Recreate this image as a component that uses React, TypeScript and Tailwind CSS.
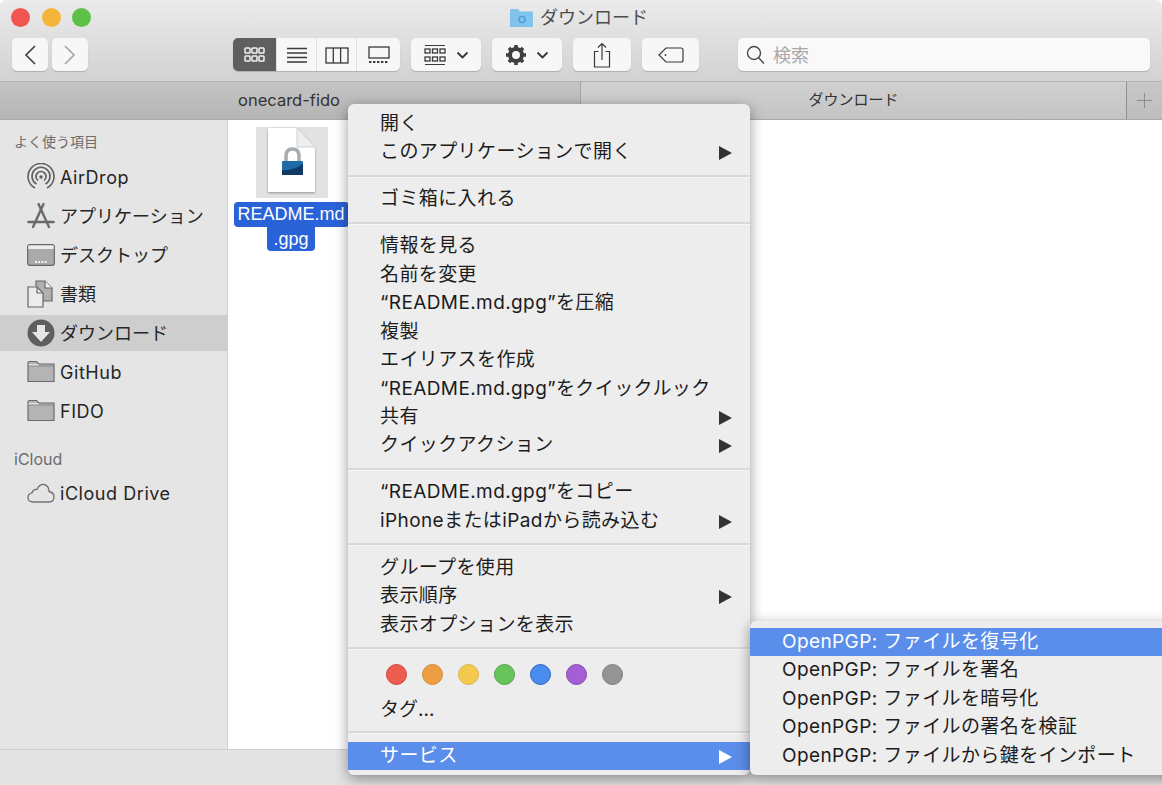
import React from 'react';

const font = { fontFamily: 'Inter, "Noto Sans CJK JP", sans-serif' };
const labelFont = { fontFamily: '"Liberation Sans", "Noto Sans CJK JP", sans-serif' };

const Arrow = ({ color = '#333' }: { color?: string }) => (
  <svg width="14" height="14" viewBox="0 0 14 14" className="absolute right-[18px] top-[8px]">
    <path d="M1 0 L14 7 L1 14 Z" fill={color} />
  </svg>
);

const MenuRow = ({ label, arrow, active }: { label: string; arrow?: boolean; active?: boolean }) => (
  <div
    className={`relative h-[28.45px] pl-[32px] text-[19px] leading-[28.45px] tracking-[0.4px] whitespace-nowrap ${
      active ? 'bg-[#5b8dea] text-white' : 'text-[#1c1c1c]'
    }`}
  >
    {label}
    {arrow && <Arrow color={active ? '#ffffff' : '#333333'} />}
  </div>
);

const Sep = () => (
  <div className="h-[18.5px] flex items-center">
    <div className="w-full h-[3px] bg-[#d9d9d9] border-b border-[#f6f6f6]" />
  </div>
);

const tagColors = [
  ['#ee5b4f', '#c9423a'],
  ['#ef9d42', '#d08a3c'],
  ['#f4c94f', '#dcb54a'],
  ['#67c45c', '#55a24c'],
  ['#4a8cf0', '#2f62b8'],
  ['#a55fd6', '#8346ad'],
  ['#949494', '#7d7d7d'],
];

const SegIcon = ({ children, w = 24, h = 20 }: { children: React.ReactNode; w?: number; h?: number }) => (
  <svg width={w} height={h} viewBox={`0 0 ${w} ${h}`} fill="none" stroke="#3a3a3a" strokeWidth="1.3">
    {children}
  </svg>
);

const Grid = ({ color }: { color: string }) => (
  <g fill="none" stroke={color} strokeWidth="1.5">
    {[2, 9, 16].map((x) =>
      [3, 11].map((y) => <rect key={`${x}-${y}`} x={x} y={y} width="5" height="5" rx="0.8" />)
    )}
  </g>
);

const ToolButton = ({ className, children }: { className: string; children: React.ReactNode }) => (
  <div className={`h-[33px] rounded-[5px] bg-[#f7f7f7] shadow-[0_1px_1px_rgba(0,0,0,0.18)] flex items-center justify-center ${className}`}>
    {children}
  </div>
);

const Chevron = () => (
  <svg width="13" height="8" viewBox="0 0 13 8" fill="none" stroke="#333" strokeWidth="1.8">
    <path d="M1.5 1.5 L6.5 6.5 L11.5 1.5" />
  </svg>
);

const FolderIcon = () => (
  <svg width="28" height="24" viewBox="0 0 28 24">
    <path d="M1 21.5 V3 Q1 1.5 2.5 1.5 H9.5 L12 4 H27 V21.5 Z" fill="#b4b4b4" stroke="#6b6b6b" strokeWidth="1.2" />
    <path d="M1 6 H27" stroke="#8a8a8a" strokeWidth="1" />
    <path d="M1.6 4.8 H11.5" stroke="#f2f2f2" strokeWidth="1" />
  </svg>
);

const sidebarRows: { label: string; icon: React.ReactNode; selected?: boolean; latin?: boolean }[] = [
  {
    label: 'AirDrop',
    latin: true,
    icon: (
      <svg width="28" height="28" viewBox="0 0 28 28" fill="none" stroke="#5f5f5f">
        <path d="M8 25 A13 13 0 1 1 20 25" strokeWidth="1.6" />
        <path d="M9.5 21 A9 9 0 1 1 18.5 21" strokeWidth="1.6" />
        <path d="M11 17.5 A5 5 0 1 1 17 17.5" strokeWidth="1.6" />
        <circle cx="14" cy="14" r="1.7" fill="#5f5f5f" stroke="none" />
      </svg>
    ),
  },
  {
    label: 'アプリケーション',
    icon: (
      <svg width="28" height="28" viewBox="0 0 28 28" fill="none" stroke="#6a6a6a" strokeLinecap="round">
        <path d="M11.5 2 L22 25" strokeWidth="2.4" />
        <path d="M16.5 2 L6 25" strokeWidth="2.4" />
        <path d="M1.5 20 H26.5" strokeWidth="2.6" />
      </svg>
    ),
  },
  {
    label: 'デスクトップ',
    icon: (
      <svg width="28" height="22" viewBox="0 0 28 22">
        <rect x="0.7" y="0.7" width="26.6" height="20.6" rx="2" fill="#aaaaaa" stroke="#666" strokeWidth="1.2" />
        <rect x="1.4" y="1.4" width="25.2" height="3.6" fill="#ececec" />
        <path d="M8 18 H20" stroke="#eeeeee" strokeWidth="2" strokeDasharray="2 1.2" />
      </svg>
    ),
  },
  {
    label: '書類',
    icon: (
      <svg width="26" height="28" viewBox="0 0 26 28" fill="none" stroke="#666" strokeWidth="1.2">
        <path d="M9 6 V1 H18 L25 8 V21 H16" fill="#b0b0b0" />
        <path d="M18 1 V8 H25" fill="#eee" />
        <path d="M1 7 H10 L16 13 V27 H1 Z" fill="#ececec" />
        <path d="M10 7 V13 H16" />
      </svg>
    ),
  },
  {
    label: 'ダウンロード',
    selected: true,
    icon: (
      <svg width="28" height="28" viewBox="0 0 28 28">
        <circle cx="14" cy="14" r="13.5" fill="#5e5e5e" />
        <path d="M10 6 H18 V13 H23 L14 23 L5 13 H10 Z" fill="#e6e6e6" />
      </svg>
    ),
  },
  { label: 'GitHub', latin: true, icon: <FolderIcon /> },
  { label: 'FIDO', latin: true, icon: <FolderIcon /> },
];

const SidebarRow = ({ label, icon, selected, latin }: { label: string; icon: React.ReactNode; selected?: boolean; latin?: boolean }) => (
  <div className={`h-[36px] mb-[3px] flex items-center text-[18px] text-[#262626] ${selected ? 'bg-[#cecece]' : ''}`}>
    <div className="w-[60px] pl-[27px] shrink-0 flex items-center">{icon}</div>
    <span className={latin ? 'tracking-[0.55px]' : ''}>{label}</span>
  </div>
);

export default function App() {
  return (
    <div className="relative w-[1162px] h-[785px] overflow-hidden flex flex-col bg-white" style={font}>
      {/* Title bar + toolbar */}
      <div className="h-[82px] shrink-0 bg-gradient-to-b from-[#ebebeb] to-[#d2d2d2] px-[12px] border-b border-[#b4b4b4] rounded-t-[6px]">
        <div className="h-[38px] flex items-center relative">
          <div className="flex gap-[11.5px] ml-[-1px] mt-[-4px]">
            <div className="w-[19px] h-[19px] rounded-full bg-[#f0554f]" />
            <div className="w-[19px] h-[19px] rounded-full bg-[#f5b53a]" />
            <div className="w-[19px] h-[19px] rounded-full bg-[#5cc146]" />
          </div>
          <div className="absolute left-[498px] top-[8px] flex items-center gap-[7px] text-[18px] text-[#4c4c4c] leading-[20px]">
            <svg width="23" height="19" viewBox="0 0 23 19">
              <path d="M0 18 V1.5 Q0 0 1.5 0 H8 L10 2.5 H23 V18 Z" fill="#80c4ee" />
              <circle cx="12" cy="10.5" r="3" fill="none" stroke="#4f9fd8" strokeWidth="1.6" />
            </svg>
            <span>ダウンロード</span>
          </div>
        </div>
        <div className="flex items-start">
          <ToolButton className="w-[36px]">
            <svg width="14" height="22" viewBox="0 0 14 22" fill="none" stroke="#444" strokeWidth="1.7">
              <path d="M12 2 L3 11 L12 20" />
            </svg>
          </ToolButton>
          <ToolButton className="w-[36px] ml-[4px]">
            <svg width="14" height="22" viewBox="0 0 14 22" fill="none" stroke="#a5a5a5" strokeWidth="1.7">
              <path d="M2 2 L11 11 L2 20" />
            </svg>
          </ToolButton>
          <div className="ml-[145px] w-[167px] h-[33px] rounded-[5px] bg-[#f7f7f7] shadow-[0_1px_1px_rgba(0,0,0,0.18)] flex overflow-hidden divide-x divide-[#e0e0e0]">
            <div className="w-[44px] bg-[#5f5f5f] flex items-center justify-center">
              <svg width="24" height="20" viewBox="0 0 24 20"><Grid color="#f2f2f2" /></svg>
            </div>
            <div className="w-[40px] flex items-center justify-center">
              <SegIcon>
                <path d="M2 3.5 H22 M2 8 H22 M2 12.5 H22 M2 17 H22" />
              </SegIcon>
            </div>
            <div className="w-[40px] flex items-center justify-center">
              <SegIcon>
                <rect x="1" y="3" width="22" height="15" />
                <path d="M8.3 3 V18 M15.6 3 V18" />
              </SegIcon>
            </div>
            <div className="flex-1 flex items-center justify-center">
              <SegIcon>
                <rect x="2" y="2" width="20" height="11" />
                <path d="M2 17 H22" strokeWidth="2" strokeDasharray="2.4 1.6" />
              </SegIcon>
            </div>
          </div>
          <ToolButton className="w-[70px] ml-[11px] gap-[9px]">
            <svg width="24" height="22" viewBox="0 0 24 22">
              <g fill="none" stroke="#3a3a3a">
                <path d="M2 1.5 H22 M2 20.5 H22" strokeWidth="1.1" />
              </g>
              <g fill="none" stroke="#3a3a3a" strokeWidth="1.3">
                {[2, 9.5, 17].map((x) =>
                  [5, 13].map((y) => <rect key={`${x}-${y}`} x={x} y={y} width="5" height="4" />)
                )}
              </g>
            </svg>
            <Chevron />
          </ToolButton>
          <ToolButton className="w-[70px] ml-[11px] gap-[9px]">
            <svg width="22" height="22" viewBox="0 0 22 22">
              <circle cx="11" cy="11" r="6" fill="none" stroke="#3f3f3f" strokeWidth="4" />
              <g stroke="#3f3f3f" strokeWidth="3.6">
                <path d="M11 1 V5 M11 17 V21 M1 11 H5 M17 11 H21 M3.9 3.9 L6.8 6.8 M15.2 15.2 L18.1 18.1 M3.9 18.1 L6.8 15.2 M15.2 6.8 L18.1 3.9" />
              </g>
            </svg>
            <Chevron />
          </ToolButton>
          <ToolButton className="w-[58px] ml-[11px]">
            <svg width="18" height="26" viewBox="0 0 18 26" fill="none" stroke="#3a3a3a" strokeWidth="1.2">
              <path d="M5.5 9.5 H1.5 V25 H16.5 V9.5 H12.5" />
              <path d="M9 18 V1.5 M5 5.5 L9 1.5 L13 5.5" />
            </svg>
          </ToolButton>
          <ToolButton className="w-[57px] ml-[11px]">
            <svg width="26" height="16" viewBox="0 0 26 16" fill="none" stroke="#3a3a3a" strokeWidth="1.2">
              <path d="M8 1 H23 Q25 1 25 3 V13 Q25 15 23 15 H8 L1 8 Z" />
              <circle cx="7.5" cy="8" r="0.9" fill="#3a3a3a" stroke="none" />
            </svg>
          </ToolButton>
          <div className="w-[412px] h-[33px] ml-[39px] rounded-[5px] bg-[#f9f9f9] shadow-[0_1px_1px_rgba(0,0,0,0.18)] flex items-center pl-[8px] gap-[8px]">
            <svg width="19" height="20" viewBox="0 0 19 20" fill="none" stroke="#4a4a4a" strokeWidth="1.4">
              <circle cx="8" cy="8" r="6.5" />
              <path d="M12.6 12.8 L18 18.5" />
            </svg>
            <span className="text-[18px] leading-[20px] mt-[2px] text-[#a8a8a8]">検索</span>
          </div>
        </div>
      </div>

      {/* Tab bar */}
      <div className="h-[38px] shrink-0 flex text-[15px] text-[#333] border-b border-[#a9a9a9]">
        <div className="w-[581px] bg-gradient-to-b from-[#c4c4c4] to-[#b5b5b5] border-r border-[#a4a4a4] flex items-center justify-center">
          <span className="text-[16.5px] mr-[2px]">onecard-fido</span>
        </div>
        <div className="flex-1 bg-gradient-to-b from-[#d0d0d0] to-[#c4c4c4] flex items-center justify-center">
          ダウンロード
        </div>
        <div className="w-[36px] bg-gradient-to-b from-[#c8c8c8] to-[#bdbdbd] border-l border-[#8f8f8f] flex items-center justify-center">
          <svg width="15" height="15" viewBox="0 0 15 15" stroke="#8e8e8e" strokeWidth="1">
            <path d="M7.5 0 V15 M0 7.5 H15" />
          </svg>
        </div>
      </div>

      {/* Body */}
      <div className="flex-1 flex min-h-0">
        <div className="w-[228px] shrink-0 bg-[#e5e5e5] border-r border-[#cfcfcf] pt-[12px]">
          <div className="h-[20px] mb-[7px] pl-[14px] text-[14px] leading-[20px] text-[#6c6c6c]">よく使う項目</div>
          {sidebarRows.map((row) => (
            <SidebarRow key={row.label} {...row} />
          ))}
          <div className="h-[20px] mt-[20px] mb-[6px] pl-[14px] text-[16px] leading-[20px] text-[#6c6c6c]">iCloud</div>
          <SidebarRow
            label="iCloud Drive"
            latin
            icon={
              <svg width="28" height="20" viewBox="0 0 28 20" fill="#e4e4e4" stroke="#707070" strokeWidth="1.3">
                <path d="M6 19 Q1 19 1 14.5 Q1 10.5 5 9.8 Q6.5 5.5 10 6.5 Q12.5 1 17 1.5 Q22 2.5 22 8.5 Q27 9.5 27 14 Q27 19 22 19 Z" />
              </svg>
            }
          />
        </div>
        <div className="flex-1 bg-white pt-[7px] pl-[6px] flex flex-col">
          <div className="w-[114px] flex flex-col items-center">
            <div className="w-[72px] h-[71px] bg-[#e2e2e2] flex justify-center ml-[1px]">
              <div className="mt-[1px] h-[64px] drop-shadow-[0_1px_1px_rgba(0,0,0,0.35)]">
                <div className="relative w-[47px] h-[64px] bg-white [clip-path:polygon(0_0,62%_0,100%_30%,100%_100%,0_100%)]">
                  <svg width="47" height="64" viewBox="0 0 47 64" className="absolute left-0 top-0">
                    <path d="M29 0 V19 H47 Z" fill="#eeeeee" stroke="#cfcfcf" strokeWidth="1" />
                    <path d="M18 34 V28 Q18 21 24.5 21 Q31 21 31 28 V34" fill="none" stroke="#a5abb0" strokeWidth="3.5" />
                    <rect x="14" y="33" width="21" height="14" rx="1" fill="#1f6ba6" />
                    <path d="M14 42 Q24 43 35 36 V47 H14 Z" fill="#123a66" />
                  </svg>
                </div>
              </div>
            </div>
            <div className="mt-[4px] flex flex-col items-center text-[18px] leading-[24.5px] text-white" style={labelFont}>
              <div className="bg-[#2a62d8] rounded-[4px] px-[4px] h-[24.5px] whitespace-nowrap">README.md</div>
              <div className="bg-[#2a62d8] rounded-b-[4px] px-[6px] h-[24.5px]">.gpg</div>
            </div>
          </div>
        </div>
      </div>

      {/* Status bar */}
      <div className="h-[36px] shrink-0 bg-[#e3e3e3] border-t border-[#cfcfcf]" />

      {/* Context menu */}
      <div className="absolute left-[348px] top-[104px] w-[402px] h-[671px] bg-[#ededed] rounded-[6px] pt-[6px] shadow-[0_4px_14px_rgba(0,0,0,0.4)]">
        <MenuRow label="開く" />
        <MenuRow label="このアプリケーションで開く" arrow />
        <Sep />
        <MenuRow label="ゴミ箱に入れる" />
        <Sep />
        <MenuRow label="情報を見る" />
        <MenuRow label="名前を変更" />
        <MenuRow label="“README.md.gpg”を圧縮" />
        <MenuRow label="複製" />
        <MenuRow label="エイリアスを作成" />
        <MenuRow label="“README.md.gpg”をクイックルック" />
        <MenuRow label="共有" arrow />
        <MenuRow label="クイックアクション" arrow />
        <Sep />
        <MenuRow label="“README.md.gpg”をコピー" />
        <MenuRow label="iPhoneまたはiPadから読み込む" arrow />
        <Sep />
        <MenuRow label="グループを使用" />
        <MenuRow label="表示順序" arrow />
        <MenuRow label="表示オプションを表示" />
        <Sep />
        <div className="flex gap-[15px] pl-[38px] pt-[6px] h-[34px]">
          {tagColors.map(([fill, edge]) => (
            <div
              key={fill}
              className="w-[21px] h-[21px] rounded-full border"
              style={{ backgroundColor: fill, borderColor: edge }}
            />
          ))}
        </div>
        <div className="h-[31.5px] pl-[32px] pt-[4px] text-[19px] leading-[28px] text-[#1c1c1c]">タグ...</div>
        <Sep />
        <MenuRow label="サービス" arrow active />
      </div>

      {/* Services submenu */}
      <div className="absolute left-[750px] top-[621px] w-[430px] h-[154px] bg-[#ededed] rounded-[6px] pt-[7px] shadow-[0_4px_14px_rgba(0,0,0,0.4)]">
        <MenuRow label="OpenPGP: ファイルを復号化" active />
        <MenuRow label="OpenPGP: ファイルを署名" />
        <MenuRow label="OpenPGP: ファイルを暗号化" />
        <MenuRow label="OpenPGP: ファイルの署名を検証" />
        <MenuRow label="OpenPGP: ファイルから鍵をインポート" />
      </div>
    </div>
  );
}
